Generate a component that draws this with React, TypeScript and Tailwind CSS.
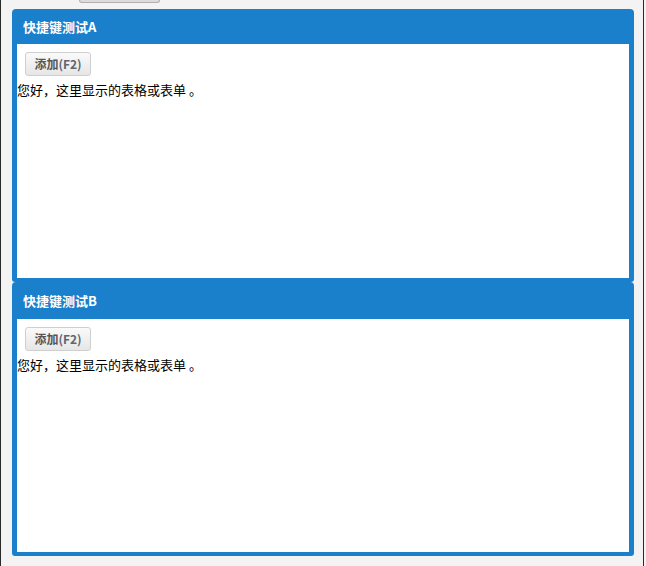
import React from "react";

const font = { fontFamily: '"Noto Sans CJK SC", "Noto Sans", sans-serif' };

function Panel({ title, headerH, bodyH }: { title: string; headerH: string; bodyH: string }) {
  return (
    <div className="w-[622px] rounded-t-[4px] rounded-b-[3px] bg-[#1a80cc] px-[5px] pb-[4px]">
      <div className={`${headerH} flex items-center pl-[6px] text-[13px] font-bold text-white`}>
        {title}
      </div>
      <div className={`${bodyH} bg-white pt-[8px]`}>
        <button className="ml-[8px] block h-[24px] w-[66px] rounded-[3px] border border-[#cfcfcf] bg-gradient-to-b from-[#fafafa] to-[#e6e6e6] text-[12px] font-bold leading-none text-[#555]">
          添加<span className="text-[#5e6670]">(F2)</span>
        </button>
        <div className="text-[13px] leading-[27px] text-black">您好，这里显示的表格或表单 。</div>
      </div>
    </div>
  );
}

export default function App() {
  return (
    <div className="h-[566px] w-[646px] bg-[#f3f3f3]" style={font}>
      <div className="relative h-[566px] w-[644px] border-x border-[#2a2a2a]">
        <div className="absolute left-[78px] top-0 h-[3px] w-[81px] rounded-b-[3px] border border-t-0 border-[#b0b0b0] bg-[#dcdcdc]" />
        <div className="flex flex-col pl-[11px] pt-[9px]">
          <Panel title="快捷键测试A" headerH="h-[35px]" bodyH="h-[234px]" />
          <Panel title="快捷键测试B" headerH="h-[37px]" bodyH="h-[233px]" />
        </div>
      </div>
    </div>
  );
}
